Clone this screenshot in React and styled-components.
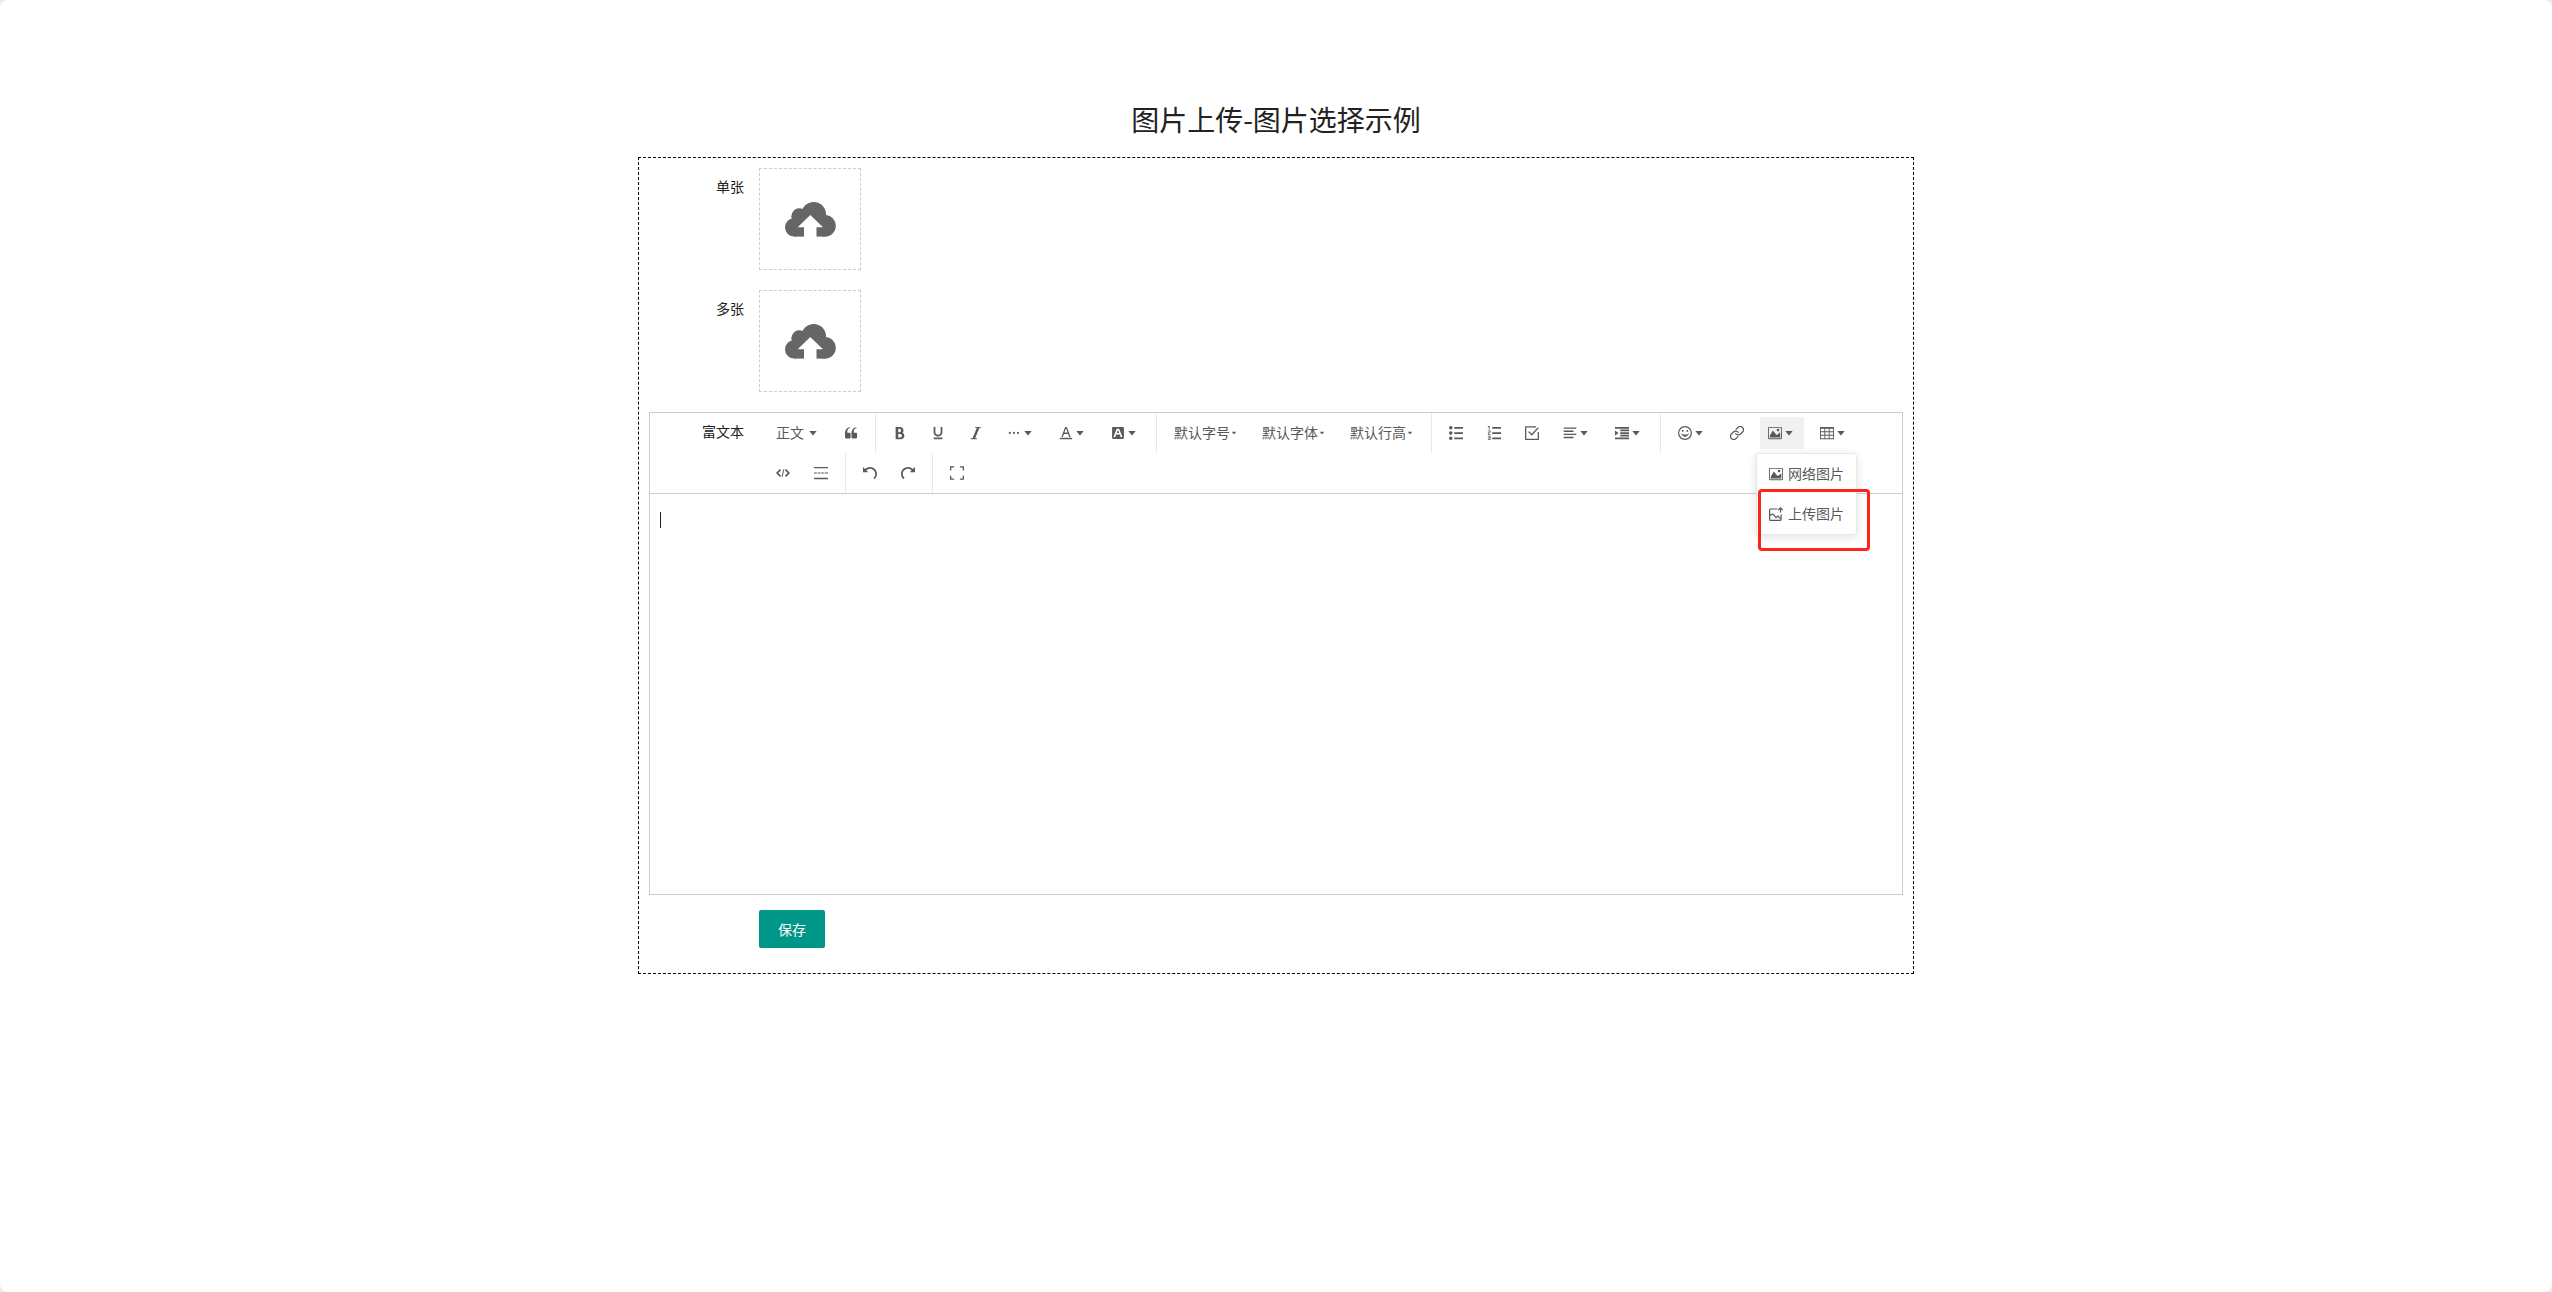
import React from "react";
import styled, { createGlobalStyle } from "styled-components";

const GlobalStyle = createGlobalStyle`
  *, *::before, *::after { box-sizing: border-box; }
  body {
    margin: 0;
    background: #ececec;
    color: #222;
    font: 14px/20px "Noto Sans CJK SC", "Noto Sans", sans-serif;
  }
  button, select, textarea { font: inherit; color: inherit; }
`;

const Page = styled.main`
  min-height: 100vh;
  padding-top: 99px;
  border-radius: 8px;
  background: #fff;
`;

const Title = styled.h1`
  margin: 0 0 18px;
  font-size: 28px;
  font-weight: 400;
  line-height: 40px;
  text-align: center;
`;

const Form = styled.form`
  display: flex;
  flex-direction: column;
  gap: 20px;
  width: 50%;
  margin: 0 auto;
  padding: 10px 10px 25px;
  border: 1px dashed #000;
`;

const FormItem = styled.div`
  display: flex;
  align-items: flex-start;
`;

const Label = styled.label`
  flex: none;
  width: 110px;
  padding: 8px 15px;
  text-align: right;
`;

const UploadBox = styled.button`
  display: flex;
  align-items: center;
  justify-content: center;
  width: 102px;
  height: 102px;
  padding: 0;
  border: 1px dashed #ccc;
  background: none;
`;

const EditorGroup = styled.div`
  display: flex;
  flex-direction: column;
  gap: 15px;
`;

const Editor = styled.section`
  border: 1px solid #ccc;
`;

const ToolbarRow = styled.div`
  display: flex;
  border-bottom: 1px solid #ccc;
`;

const ToolbarLabel = styled(Label)`
  width: 109px;
`;

const Tools = styled.div`
  flex: 1;
  display: flex;
  flex-wrap: wrap;
  padding: 0 5px;
  color: #595959;
`;

const ToolItem = styled.div`
  position: relative;
  height: 40px;
  padding: 4px;
`;

const ToolButton = styled.button`
  display: flex;
  align-items: center;
  height: 32px;
  padding: 0 8px;
  border: 0;
  background: ${(p) => (p.$active ? "#f1f1f1" : "none")};
`;

const SelectField = styled.div`
  display: grid;
  align-items: center;
  width: ${(p) => p.$width}px;
  height: 32px;

  > * { grid-area: 1 / 1; }
  > svg { justify-self: end; margin-right: 8px; pointer-events: none; }
`;

const ToolSelect = styled.select`
  width: 100%;
  height: 30px;
  align-self: start;
  padding: 0 8px;
  border: 0;
  appearance: none;
  background: none;
`;

const Divider = styled.span`
  width: 1px;
  height: 40px;
  margin: 0 5px;
  background: #e8e8e8;
`;

const Icon = styled.svg`
  display: block;
  flex: none;
  width: ${(p) => p.$size || 14}px;
  height: 14px;
  fill: currentColor;
`;

const Menu = styled.ul`
  position: absolute;
  z-index: 1;
  top: 40px;
  left: 0;
  margin: 0;
  padding: 0;
  list-style: none;
  border: 1px solid #e8e8e8;
  border-radius: 3px;
  background: #fff;
  box-shadow: 0 2px 10px rgba(0, 0, 0, 0.12);
`;

const MenuItem = styled.li`
  position: relative;
  padding: 4px;
`;

const MenuButton = styled(ToolButton)`
  gap: 5px;
  white-space: nowrap;
`;

const MenuText = styled.span`
  padding-bottom: 2px;
`;

const Highlight = styled.span`
  position: absolute;
  top: -5px;
  left: 1px;
  width: 112px;
  height: 62px;
  border: 3px solid #ff2318;
  border-radius: 4px;
  pointer-events: none;
`;

const TextArea = styled.div`
  display: flex;
  height: 400px;
  padding: 18px 10px;
`;

const Caret = styled.span`
  flex: none;
  width: 1px;
  height: 16px;
  background: #222;
`;

const TextInput = styled.textarea`
  flex: 1;
  padding: 0;
  border: 0;
  outline: 0;
  resize: none;
  background: none;
`;

const Save = styled.button`
  width: 66px;
  height: 38px;
  margin-left: 110px;
  padding: 0;
  border: 0;
  border-radius: 2px;
  background: #009688;
  color: #fff;
`;

const paths = {
  quote:
    "M894.6 907.1H605.4c-32.6 0-59-26.4-59-59V608.2l-4-14.9c0-315.9 125.5-485.1 376.5-507.5v59.8C752.7 180.4 711.3 315.8 711.3 442.4v41.2l31.5 12.3h151.8c32.6 0 59 26.4 59 59v293.2c0 32.5-26.4 59-59 59z m-472 0H133.4c-32.6 0-59-26.4-59-59V608.2l-4-14.9c0-315.9 125.5-485.1 376.5-507.5v59.8C280.7 180.4 239.3 315.8 239.3 442.4v41.2l31.5 12.3h151.8c32.6 0 59 26.4 59 59v293.2c0 32.5-26.4 59-59 59z",
  bold:
    "M707.872 484.64A254.88 254.88 0 0 0 768 320c0-141.152-114.848-256-256-256H192v896h384c141.152 0 256-114.848 256-256a256.096 256.096 0 0 0-124.128-219.36zM384 192h101.504c55.968 0 101.504 57.408 101.504 128s-45.536 128-101.504 128H384V192z m159.008 640H384V576h159.008c58.464 0 106.016 57.408 106.016 128s-47.552 128-106.016 128z",
  underline:
    "M704 64h128v416c0 159.072-143.264 288-320 288s-320-128.928-320-288V64h128v416c0 40.16 18.24 78.688 51.36 108.512 36.896 33.216 86.848 51.488 140.64 51.488s103.744-18.304 140.64-51.488c33.12-29.792 51.36-68.352 51.36-108.512zM192 832h640v128H192z",
  italic: "M896 64v64h-128L448 896h128v64H128v-64h128L576 128h-128V64z",
  more:
    "M128 505.600a76.800 76.800 0 1 0 153.600 0 76.800 76.800 0 1 0-153.600 0ZM428.800 505.600a76.800 76.800 0 1 0 153.600 0 76.800 76.800 0 1 0-153.600 0ZM729.600 505.600a76.800 76.800 0 1 0 153.600 0 76.800 76.800 0 1 0-153.600 0Z",
  color:
    "M64 864h896v96H64zM360.58 576h302.85l81.53 224h102.16L579.24 64H444.77L176.89 800h102.16l81.53-224zM512 159.96L628.49 480H395.52L512 159.96z",
  background:
    "M510 315l84.700 197h-177.200l76.800-197zM945.200 157.500v709c0 43.300-35.400 78.700-78.700 78.700h-709c-43.300 0-78.700-35.400-78.700-78.700v-709c0-43.300 35.400-78.700 78.700-78.700h709c43.300 0 78.700 35.400 78.700 78.700z m-108.300 644L600.600 216.600c-5.900-11.800-15.700-19.700-29.500-19.700h-139.800c-11.800 0-23.600 7.900-27.600 19.700l-216.600 584.900c-3.900 11.800 3.900 25.600 17.700 25.600h80.800c11.800 0 23.600-9.900 27.500-21.700l63-175.200h263.900l69 175.200c3.900 11.800 15.700 21.700 27.500 21.700h80.800c13.800 0 23.600-13.800 19.600-25.600z",
  bullets:
    "M384 64h640v128H384V64z m0 384h640v128H384v-128z m0 384h640v128H384v-128zM0 128a128 128 0 1 1 256 0 128 128 0 0 1-256 0z m0 384a128 128 0 1 1 256 0 128 128 0 0 1-256 0z m0 384a128 128 0 1 1 256 0 128 128 0 0 1-256 0z",
  numbers:
    "M384 832h640v128H384z m0-384h640v128H384z m0-384h640v128H384zM192 0v256H128V64H64V0zM128 526v50h128v64H64v-146l128-60V384H64v-64h192v146zM256 704v320H64v-64h128v-64H64v-64h128v-64H64v-64z",
  todo:
    "M0 70q0-50 50-50H800v90H94v820h836V440h94v534q0 50-50 50H50q-50 0-50-50ZM225 445l70-70 200 200L940 90l72 65L500 705Z",
  align:
    "M768 793.600v102.400H51.200v-102.400h716.800z m204.800-230.400v102.400H51.200v-102.400h921.600z m-204.800-230.400v102.400H51.200v-102.400h716.800zM972.800 102.400v102.400H51.200V102.400h921.600z",
  indent:
    "M0 64h1024v128H0z m384 192h640v128H384z m0 192h640v128H384z m0 192h640v128H384zM0 832h1024v128H0z m0-128V320l256 192z",
  image:
    "M959.877 128l0.123 0.123v767.775l-0.123 0.122H64.102l-0.122-0.122V128.123l0.122-0.123h895.775zM960 64H64C28.795 64 0 92.795 0 128v768c0 35.205 28.795 64 64 64h896c35.205 0 64-28.795 64-64V128c0-35.205-28.795-64-64-64zM832 288.01c0 53.023-42.988 96.01-96.01 96.01s-96.01-42.987-96.01-96.01S682.967 192 735.99 192 832 234.988 832 288.01zM896 832H128V704l224.01-384 256 320h64l224.01-192z",
  table:
    "M0 64v896h1024V64H0z m384 576v-192h256v192h-256z m256 64v192h-256v-192h256z m0-512v192h-256V192h256zM320 192v192H64V192h256z m-256 256h256v192H64v-192z m640 0h256v192h-256v-192z m0-64V192h256v192h-256zM64 704h256v192H64v-192z m640 192v-192h256v192h-256z",
  rule:
    "M0 64h1024v100H0zM0 470h230v84H0zM285 470h190v84H285zM530 470h190v84H530zM775 470h249v84H775zM0 860h1024v100H0z",
  undo:
    "M512 64A510.272 510.272 0 0 0 149.984 213.984L0.032 64v384h384L240.512 304.48A382.784 382.784 0 0 1 512.032 192c212.064 0 384 171.936 384 384 0 114.688-50.304 217.632-130.016 288l84.672 96a510.72 510.72 0 0 0 173.344-384c0-282.784-229.216-512-512-512z",
  redo:
    "M0 576a510.72 510.72 0 0 0 173.344 384l84.672-96A383.136 383.136 0 0 1 128 576C128 363.936 299.936 192 512 192c106.048 0 202.048 42.976 271.52 112.48L640 448h384V64l-149.984 149.984A510.272 510.272 0 0 0 512 64C229.216 64 0 293.216 0 576z",
  fullscreen:
    "M0 20h300v95H95v205H0zM724 20h300v300h-95V115H724zM0 704h95v205h205v95H0zM929 704h95v300H724v-95h205z",
};

const strokes = {
  code: (
    <>
      <path d="M4.500 3.700 1.200 7l3.300 3.300M9.500 3.700 12.800 7l-3.300 3.300" strokeWidth="1.700" />
      <path d="M7.900 3.200 6.100 10.800" strokeWidth="1" />
    </>
  ),
  emoji: (
    <>
      <circle cx="7" cy="7" r="6.400" strokeWidth="1.200" />
      <path d="M3.600 7.600a3.500 3.500 0 0 0 6.800 0" strokeWidth="1" />
      <path d="M4.700 8.800h4.600L7 10.300z" fill="currentColor" strokeWidth="0.500" />
      <path d="M4.700 4v1.800M9.300 4v1.800" strokeWidth="1.500" />
    </>
  ),
  link: (
    <g transform="translate(-0.800 -0.800) scale(0.650)" strokeWidth="1.900" strokeLinecap="round">
      <path d="M10 13a5 5 0 0 0 7.540.540l3-3a5 5 0 0 0-7.070-7.070l-3 3" />
      <path d="M14 11a5 5 0 0 0-7.540-.540l-3 3a5 5 0 0 0 7.070 7.070l3-3" />
    </g>
  ),
  upload: (
    <g strokeWidth="1.200">
      <path d="M8.300 2H1.500a.9.900 0 0 0-.9.900v9.600a.9.900 0 0 0 .9.900h9.700a.9.900 0 0 0 .9-.9V7.500" />
      <path d="M.8 8.400 3.800 6.900l3.200 3.700 1.800-1.500 3.200 3" />
      <path d="M11.500 5.600V.8M9.300 3l2.200-2.200L13.700 3" />
    </g>
  ),
};

function Glyph({ name }) {
  if (strokes[name]) {
    return (
      <Icon viewBox="0 0 14 14" aria-hidden="true">
        <g fill="none" stroke="currentColor">{strokes[name]}</g>
      </Icon>
    );
  }
  return (
    <Icon viewBox="0 0 1024 1024" aria-hidden="true">
      <path d={paths[name]} />
    </Icon>
  );
}

function Arrow({ size = 14 }) {
  return (
    <Icon $size={size} viewBox="0 0 1024 1024" aria-hidden="true">
      <path d="M270 364h484q28 0 12 24L530 680q-18 20-36 0L258 388q-16-24 12-24z" />
    </Icon>
  );
}

function Cloud() {
  return (
    <svg width="51" height="35" viewBox="0 0 51 35" fill="#666" aria-hidden="true">
      <circle cx="9.300" cy="25.300" r="9.300" />
      <circle cx="14.300" cy="14.300" r="8" />
      <circle cx="28.700" cy="12.300" r="12.300" />
      <circle cx="40" cy="23.800" r="10.800" />
      <path d="M9.300 34.600V16h31v18.600z" />
      <path fill="#fff" d="M25.300 13 38 25.200h-6.500V35H19v-9.800h-6.300z" />
    </svg>
  );
}

function Tool({ icon, label, drop, active, children }) {
  return (
    <ToolItem>
      <ToolButton type="button" aria-label={label} $active={active}>
        <Glyph name={icon} />
        {drop && <Arrow />}
      </ToolButton>
      {children}
    </ToolItem>
  );
}

function Choice({ text, label, width = 80, arrow = 8 }) {
  return (
    <ToolItem>
      <SelectField $width={width}>
        <ToolSelect aria-label={label}>
          <option>{text}</option>
        </ToolSelect>
        <Arrow size={arrow} />
      </SelectField>
    </ToolItem>
  );
}

function Upload({ id, label }) {
  return (
    <FormItem>
      <Label htmlFor={id}>{label}</Label>
      <UploadBox id={id} type="button">
        <Cloud />
      </UploadBox>
    </FormItem>
  );
}

export default function App() {
  return (
    <>
      <GlobalStyle />
      <Page>
        <Title>图片上传-图片选择示例</Title>
        <Form onSubmit={(e) => e.preventDefault()}>
          <Upload id="single" label="单张" />
          <Upload id="multiple" label="多张" />
          <EditorGroup>
            <Editor>
              <ToolbarRow>
                <ToolbarLabel htmlFor="content">富文本</ToolbarLabel>
                <Tools role="toolbar">
                  <Choice text="正文" label="标题" width={60} arrow={14} />
                  <Tool icon="quote" label="引用" />
                  <Divider />
                  <Tool icon="bold" label="粗体" />
                  <Tool icon="underline" label="下划线" />
                  <Tool icon="italic" label="斜体" />
                  <Tool icon="more" label="更多" drop />
                  <Tool icon="color" label="文字颜色" drop />
                  <Tool icon="background" label="背景色" drop />
                  <Divider />
                  <Choice text="默认字号" label="字号" />
                  <Choice text="默认字体" label="字体" />
                  <Choice text="默认行高" label="行高" />
                  <Divider />
                  <Tool icon="bullets" label="无序列表" />
                  <Tool icon="numbers" label="有序列表" />
                  <Tool icon="todo" label="待办" />
                  <Tool icon="align" label="对齐" drop />
                  <Tool icon="indent" label="缩进" drop />
                  <Divider />
                  <Tool icon="emoji" label="表情" drop />
                  <Tool icon="link" label="插入链接" />
                  <Tool icon="image" label="图片" drop active>
                    <Menu>
                      <MenuItem>
                        <MenuButton type="button">
                          <Glyph name="image" />
                          <MenuText>网络图片</MenuText>
                        </MenuButton>
                      </MenuItem>
                      <MenuItem>
                        <MenuButton type="button">
                          <Glyph name="upload" />
                          <MenuText>上传图片</MenuText>
                        </MenuButton>
                        <Highlight />
                      </MenuItem>
                    </Menu>
                  </Tool>
                  <Tool icon="table" label="表格" drop />
                  <Tool icon="code" label="代码块" />
                  <Tool icon="rule" label="分割线" />
                  <Divider />
                  <Tool icon="undo" label="撤销" />
                  <Tool icon="redo" label="重做" />
                  <Divider />
                  <Tool icon="fullscreen" label="全屏" />
                </Tools>
              </ToolbarRow>
              <TextArea>
                <Caret />
                <TextInput id="content" />
              </TextArea>
            </Editor>
            <Save type="submit">保存</Save>
          </EditorGroup>
        </Form>
      </Page>
    </>
  );
}
